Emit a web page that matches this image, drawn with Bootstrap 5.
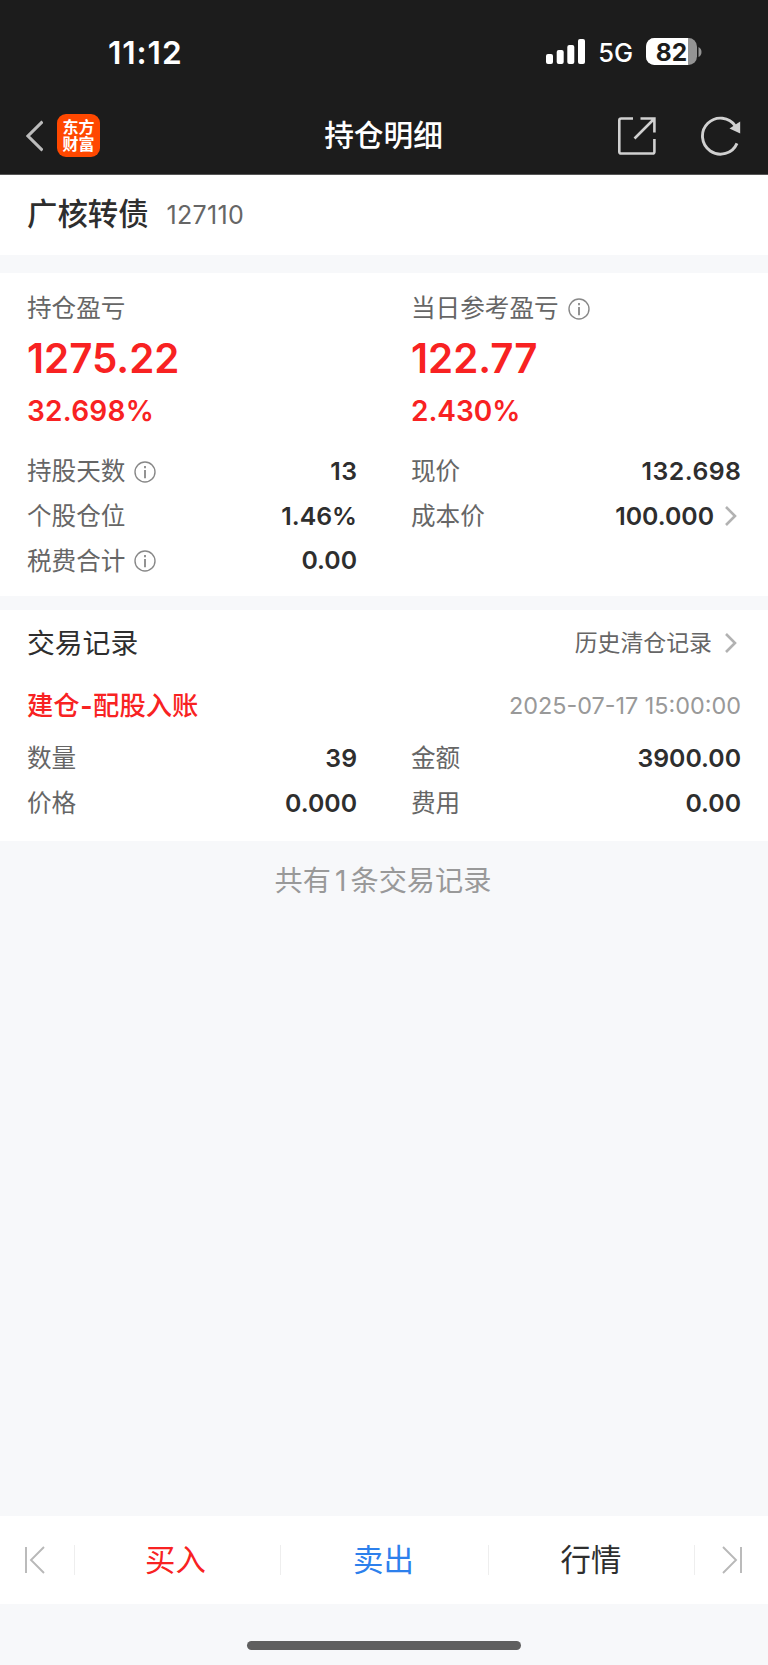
<!DOCTYPE html>
<html lang="zh-CN">
<head>
<meta charset="utf-8">
<meta name="viewport" content="width=device-width, initial-scale=1">
<title>持仓明细</title>
<link href="https://cdn.jsdelivr.net/npm/bootstrap@5.3.0/dist/css/bootstrap.min.css" rel="stylesheet">
<style>
  body { font-family: Inter, "Noto Sans CJK SC", sans-serif; background: #f7f8fa; color: #2e2e2e; min-height: 1665px; line-height: 1.3; }
  svg { display: block; flex: none; }
  .topbar { background: #1c1c1c; height: 175px; border-bottom: 1px solid #555; color: #fff; }
  .statusbar { height: 104px; padding: 0 66px 0 108px; }
  .clock { font-size: 31.7px; font-weight: 600; letter-spacing: .9px; padding-top: 2px; }
  .network { font-size: 25.5px; font-weight: 500; margin: 2px 13px 0 13px; }
  .battery { position: relative; width: 56px; height: 27px; }
  .battery-level { position: absolute; left: 0; top: 1px; width: 51px; line-height: 27px; text-align: center; font-size: 24.5px; font-weight: 700; color: #1c1c1c; }
  .titlebar { height: 63px; padding: 0 27px 0 26px; }
  .app-logo { width: 43px; height: 43px; border-radius: 9px; background: #ff4800; font: 700 16px/17px "Noto Sans CJK SC", sans-serif; padding-top: 4px; margin: -1px 0 0 14px; text-align: center; }
  .page-title { font-size: 29.7px; font-weight: 500; }
  .panel { background: #fff; }
  .inset { padding-left: 27px; padding-right: 27px; }
  .stock-name { font-size: 30.4px; font-weight: 500; }
  .stock-code { font-size: 25px; color: #666; margin-left: 18px; letter-spacing: .3px; }
  .label { font-size: 24.6px; color: #666; }
  .hint { margin-left: 9px; }
  .profit { font-size: 40.3px; font-weight: 600; padding-top: 2px; }
  .rate { font-size: 28px; font-weight: 600; padding-top: 2px; }
  .rate.wide { letter-spacing: .25px; }
  .up { color: #f82222; }
  .line { height: 44.6px; display: flex; align-items: center; justify-content: space-between; }
  .value { font-size: 24.8px; font-weight: 600; padding-bottom: 2px; }
  .value.wide { letter-spacing: .5px; margin-right: -.5px; }
  .section-title { font-size: 27.8px; }
  .history { font-size: 22.9px; color: #666; }
  .trade-type { font-size: 26.3px; font-weight: 500; }
  .dash { font-weight: 700; margin: 0 .6px; }
  .trade-time { font-size: 23.4px; color: #999; }
  .summary { font-size: 28.2px; color: #999; height: 78px; padding: 2px 2px 0 0; }
  .actions { height: 88px; font-size: 30.4px; }
  .actions .tab { border-right: 1.5px solid #eee; height: 30px; }
  .tab span { padding-top: 2px; }
  .sell { color: #2d80ec; }
  .home { height: 61px; padding-top: 37px; }
  .home div { width: 274px; height: 9px; border-radius: 5px; background: #5f5f5f; }
</style>
</head>
<body class="d-flex flex-column">
<header class="topbar">
  <div class="statusbar d-flex align-items-center justify-content-between">
    <span class="clock">11:12</span>
    <div class="d-flex align-items-center">
      <svg width="39" height="25" fill="#fff"><rect y="15" width="7" height="10" rx="2"/><rect x="10.7" y="11" width="7" height="14" rx="2"/><rect x="21.3" y="6" width="7" height="19" rx="2"/><rect x="32" width="7" height="25" rx="2"/></svg>
      <span class="network">5G</span>
      <div class="battery">
        <svg width="56" height="27"><defs><clipPath id="cell"><rect width="51" height="27" rx="8.5"/></clipPath></defs><g clip-path="url(#cell)"><rect width="51" height="27" fill="#949494"/><rect width="42" height="27" fill="#fff"/></g><path d="M52.5 9q3 1.5 3 5t-3 5z" fill="#949494"/></svg>
        <span class="battery-level">82</span>
      </div>
    </div>
  </div>
  <div class="titlebar row g-0 align-items-center">
    <div class="col d-flex align-items-center">
      <svg width="17" height="32" fill="none" stroke="#bbb" stroke-width="3.1"><path d="M16.5 1.5 2 16 16.5 30.5"/></svg>
      <div class="app-logo">东方<br>财富</div>
    </div>
    <div class="col-auto page-title">持仓明细</div>
    <div class="col d-flex align-items-center justify-content-end">
      <svg width="38" height="38" fill="none" stroke="#d0d0d0" stroke-width="2.6"><path d="M15 1.5H3.2Q1.3 1.5 1.3 3.3V34.7q0 1.8 1.9 1.8H34.6q1.8 0 1.8-1.8V22M22.5 1.5H36.4V15.5M36 2 16.5 21.5"/></svg>
      <svg width="40" height="40" style="margin-left:45px" fill="none" stroke="#d0d0d0" stroke-width="2.9"><path d="M36 27.3A18 18 0 1 1 34.5 10.2"/><path d="M39.2 5.5V17.5L28.5 12.5Z" fill="#d0d0d0" stroke="none"/></svg>
    </div>
  </div>
</header>

<section class="panel inset d-flex align-items-center" style="height:80px">
  <span class="stock-name">广核转债</span><span class="stock-code">127110</span>
</section>

<section class="panel" style="margin-top:18px;height:323px">
  <div class="row g-0">
    <div class="col-6 inset">
      <div class="label d-flex align-items-center" style="height:72px">持仓盈亏</div>
      <div class="profit up d-flex align-items-center" style="height:26px">1275.22</div>
      <div class="rate wide up d-flex align-items-center" style="height:79px">32.698%</div>
      <div class="line"><span class="label d-flex align-items-center">持股天数<svg class="hint" width="22" height="22" fill="none" stroke="#888" stroke-width="1.4"><circle cx="11" cy="11" r="10"/><path d="M11 9v8.2M11 5v2.2" stroke-width="1.8"/></svg></span><span class="value wide">13</span></div>
      <div class="line"><span class="label">个股仓位</span><span class="value">1.46%</span></div>
      <div class="line"><span class="label d-flex align-items-center">税费合计<svg class="hint" width="22" height="22" fill="none" stroke="#888" stroke-width="1.4"><circle cx="11" cy="11" r="10"/><path d="M11 9v8.2M11 5v2.2" stroke-width="1.8"/></svg></span><span class="value">0.00</span></div>
    </div>
    <div class="col-6 inset">
      <div class="label d-flex align-items-center" style="height:72px">当日参考盈亏<svg class="hint" width="22" height="22" fill="none" stroke="#888" stroke-width="1.4"><circle cx="11" cy="11" r="10"/><path d="M11 9v8.2M11 5v2.2" stroke-width="1.8"/></svg></div>
      <div class="profit up d-flex align-items-center" style="height:26px">122.77</div>
      <div class="rate up d-flex align-items-center" style="height:79px">2.430%</div>
      <div class="line"><span class="label">现价</span><span class="value wide">132.698</span></div>
      <div class="line"><span class="label">成本价</span><span class="value d-flex align-items-center">100.000<svg style="margin:1px 4px 0 11px" width="12" height="20" fill="none" stroke="#b2b2b2" stroke-width="2.6"><path d="M1 1 10 10 1 19"/></svg></span></div>
    </div>
  </div>
</section>

<section class="panel" style="margin-top:14px;height:231px;padding-top:1px">
  <div class="inset d-flex align-items-center justify-content-between" style="height:65px">
    <span class="section-title">交易记录</span>
    <span class="history d-flex align-items-center">历史清仓记录<svg style="margin:0 4px 0 13px" width="12" height="20" fill="none" stroke="#b2b2b2" stroke-width="2.6"><path d="M1 1 10 10 1 19"/></svg></span>
  </div>
  <div class="inset d-flex align-items-center justify-content-between" style="height:61px">
    <span class="trade-type up">建仓<span class="dash">-</span>配股入账</span><span class="trade-time">2025-07-17 15:00:00</span>
  </div>
  <div class="row g-0">
    <div class="col-6 inset">
      <div class="line"><span class="label">数量</span><span class="value">39</span></div>
      <div class="line"><span class="label">价格</span><span class="value">0.000</span></div>
    </div>
    <div class="col-6 inset">
      <div class="line"><span class="label">金额</span><span class="value">3900.00</span></div>
      <div class="line"><span class="label">费用</span><span class="value">0.00</span></div>
    </div>
  </div>
</section>
<div class="summary d-flex align-items-center justify-content-center">共有<span style="margin:0 4px">1</span>条交易记录</div>

<nav class="actions panel d-flex align-items-center mt-auto">
  <div class="tab d-flex align-items-center" style="width:75px;padding-left:25px"><svg width="20" height="28" fill="none" stroke="#b8b8b8" stroke-width="1.9"><path d="M1 1V27M19 1 6 14 19 27"/></svg></div>
  <div class="tab d-flex align-items-center justify-content-center" style="width:206px;padding-right:4px"><span class="up">买入</span></div>
  <div class="tab d-flex align-items-center justify-content-center" style="width:208px;padding-right:2px"><span class="sell">卖出</span></div>
  <div class="tab d-flex align-items-center justify-content-center" style="width:206px;padding-right:1px"><span>行情</span></div>
  <div class="d-flex align-items-center" style="padding-left:27px"><svg width="20" height="28" fill="none" stroke="#b8b8b8" stroke-width="1.9"><path d="M19 1V27M1 1 14 14 1 27"/></svg></div>
</nav>
<div class="home d-flex justify-content-center"><div></div></div>
<script src="https://cdn.jsdelivr.net/npm/bootstrap@5.3.0/dist/js/bootstrap.bundle.min.js"></script>
</body>
</html>
